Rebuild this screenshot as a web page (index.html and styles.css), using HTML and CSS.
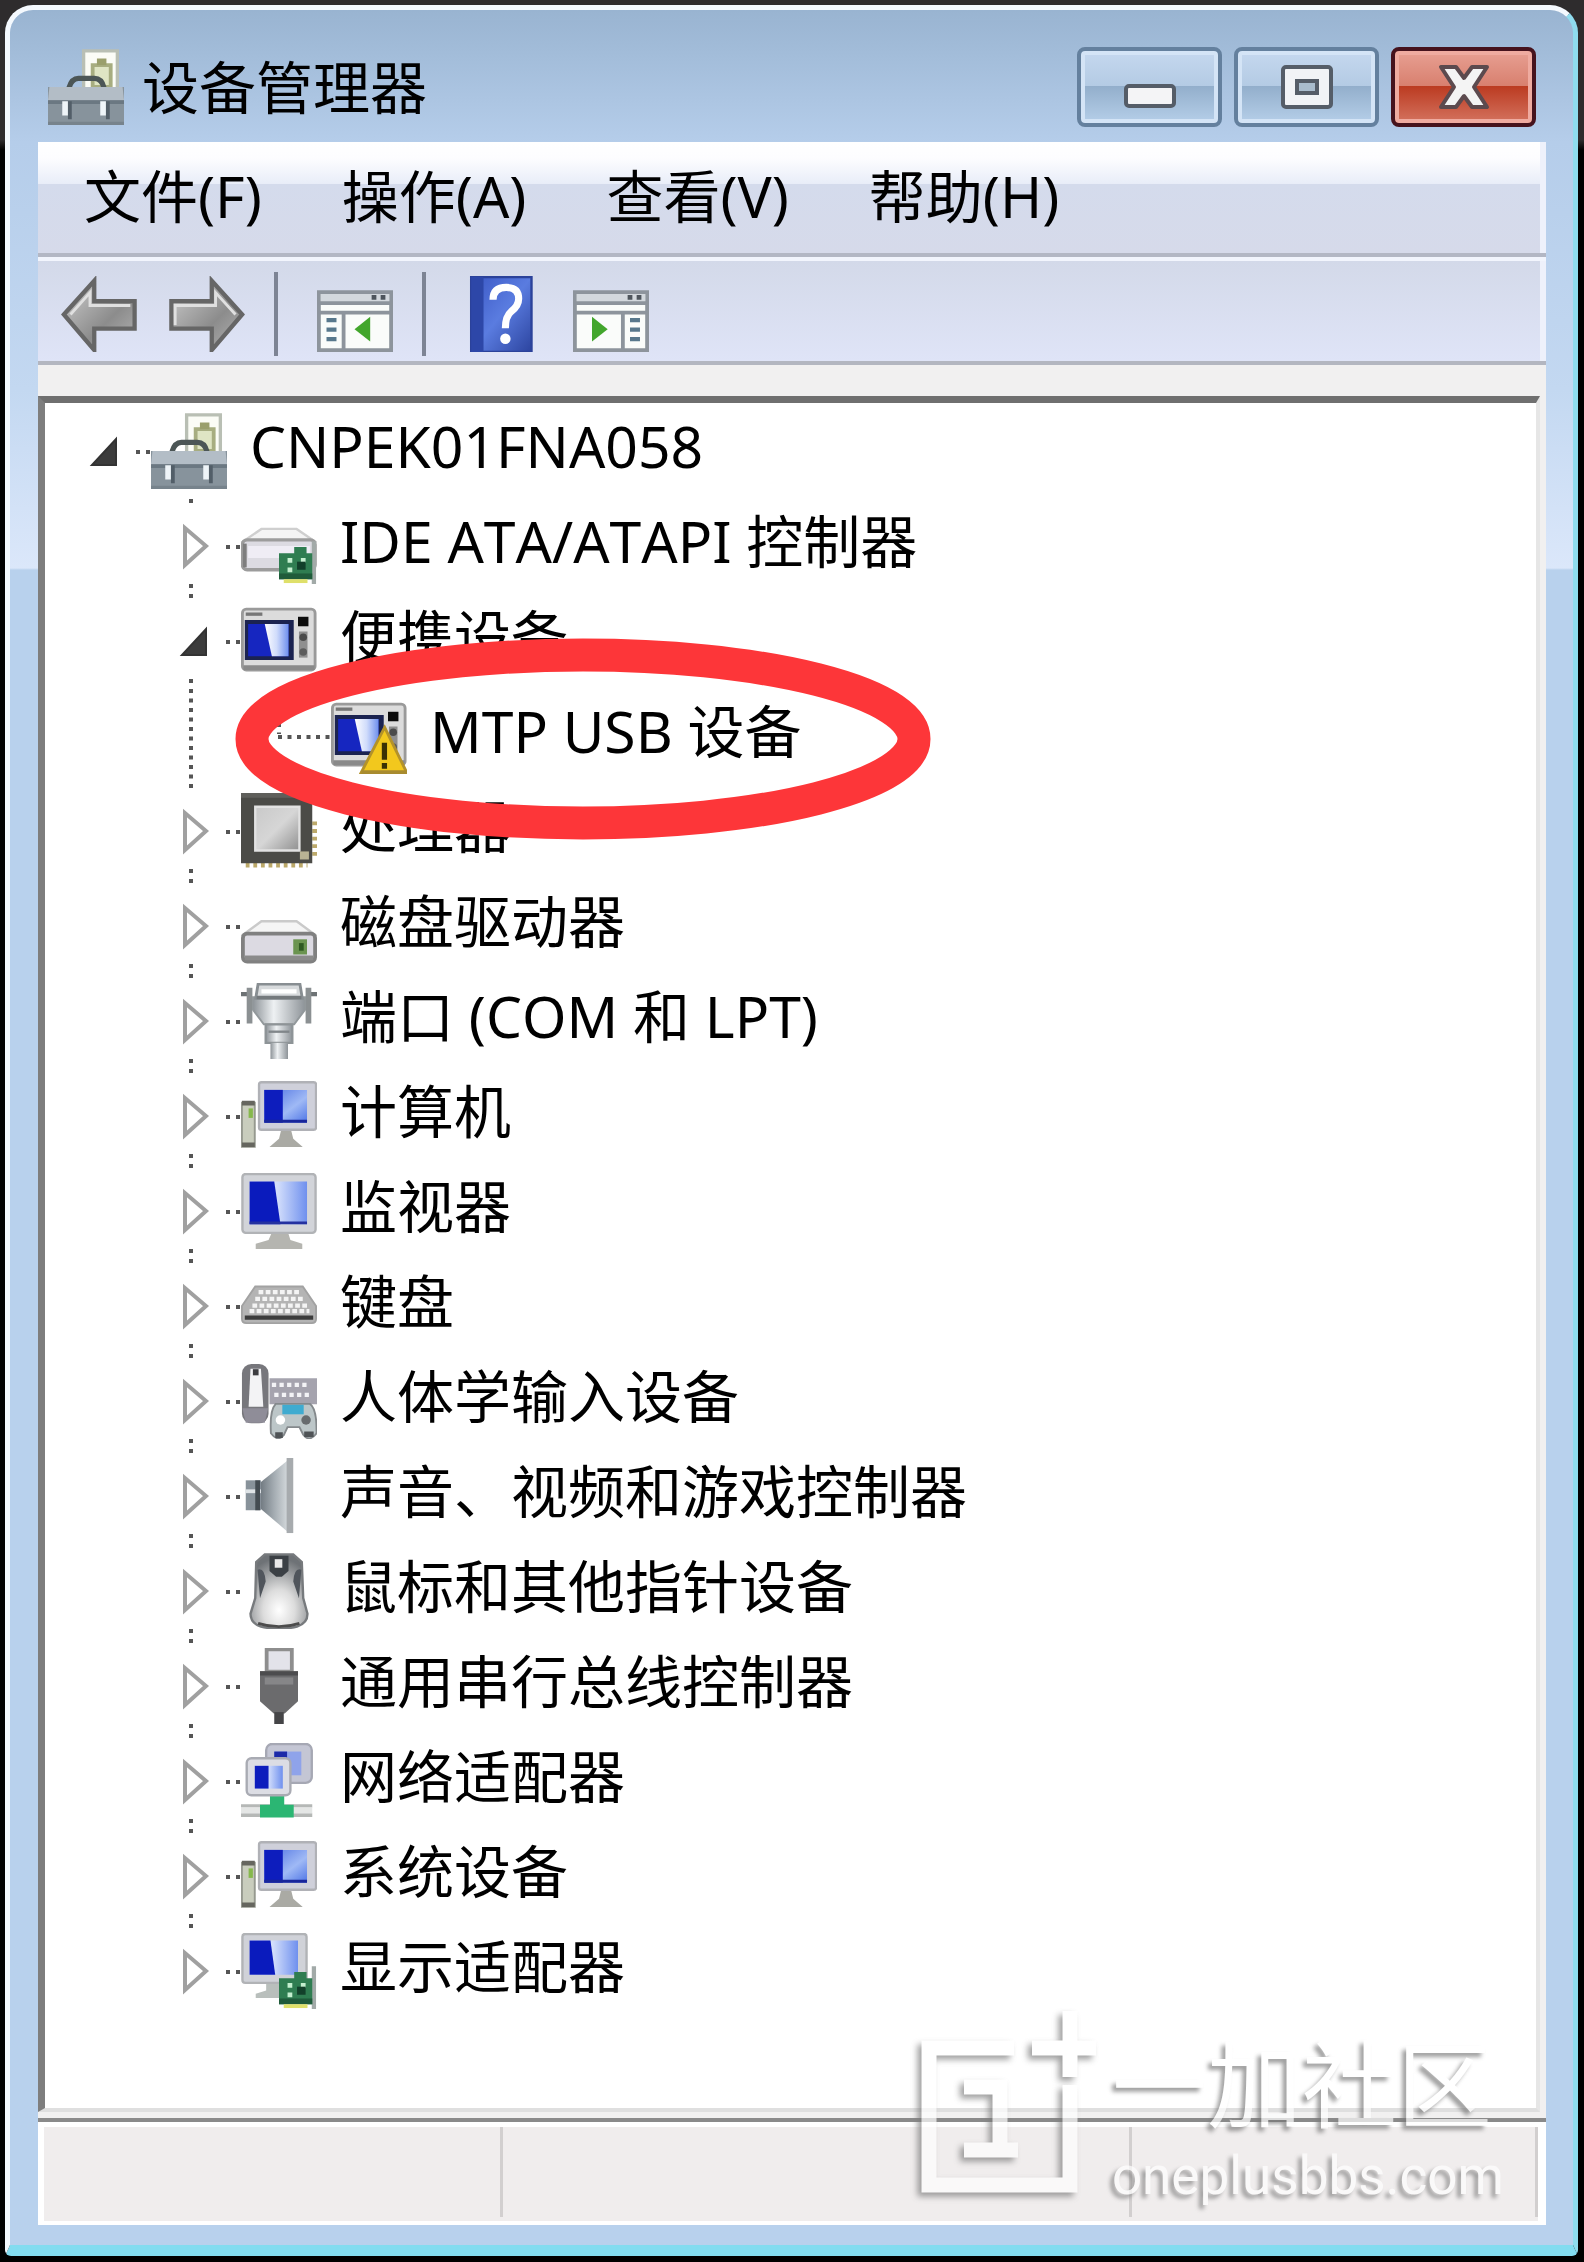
FILE: index.html
```html
<!DOCTYPE html>
<html lang="zh-CN">
<head>
  <meta charset="UTF-8">
  <meta name="viewport" content="width=device-width, initial-scale=1.0">
  <title>设备管理器</title>
  <link rel="stylesheet" href="styles.css">
</head>
<body>
  <!-- Icon symbols, 16x16 grid -->
  <svg class="sprite" width="0" height="0" aria-hidden="true">
    <defs>
      <linearGradient id="g-screen" x1="0" y1="0" x2="1" y2="1">
        <stop offset="0" stop-color="#4a6ee0"/><stop offset="0.6" stop-color="#9fb9f5"/><stop offset="1" stop-color="#4d74e6"/>
      </linearGradient>
      <linearGradient id="g-light" x1="0" y1="0" x2="1" y2="0">
        <stop offset="0" stop-color="#ffffff"/><stop offset="0.5" stop-color="#d0dcfb"/><stop offset="1" stop-color="#6f90ee"/>
      </linearGradient>
      <linearGradient id="g-side" x1="0" y1="0" x2="1" y2="0">
        <stop offset="0" stop-color="#8d9398"/><stop offset="0.4" stop-color="#eef1f3"/><stop offset="1" stop-color="#8d9398"/>
      </linearGradient>
      <linearGradient id="g-cone" x1="0" y1="0" x2="1" y2="0">
        <stop offset="0" stop-color="#6f787f"/><stop offset="0.5" stop-color="#a3abb1"/><stop offset="1" stop-color="#d3d8db"/>
      </linearGradient>
      <linearGradient id="g-arrow" x1="0" y1="0" x2="1" y2="1">
        <stop offset="0" stop-color="#d0d0d0"/><stop offset="0.6" stop-color="#8c8c8c"/><stop offset="1" stop-color="#b4b4b4"/>
      </linearGradient>
      <linearGradient id="g-chip" x1="0" y1="0" x2="1" y2="1">
        <stop offset="0" stop-color="#c9c9c9"/><stop offset="0.5" stop-color="#d6d6d6"/><stop offset="1" stop-color="#8f8f8f"/>
      </linearGradient>
      <linearGradient id="g-book" x1="0" y1="0" x2="1" y2="1">
        <stop offset="0" stop-color="#3a57c4"/><stop offset="0.5" stop-color="#5a7ce0"/><stop offset="1" stop-color="#2c449f"/>
      </linearGradient>
      <radialGradient id="g-mouse" cx="0.5" cy="0.75" r="0.7">
        <stop offset="0" stop-color="#ffffff"/><stop offset="0.4" stop-color="#dcdcdc"/><stop offset="1" stop-color="#6e7276"/>
      </radialGradient>
    </defs>

    <symbol id="i-toolbox" viewBox="0 0 16 16">
      <path d="M7.5.4h7.1v8H7.5z" fill="#fbfcf6" stroke="#b9bfb4" stroke-width=".7"/>
      <path d="M9.4 3.4h3.8V8H9.4z" fill="#dfe5c4" stroke="#a7ad80" stroke-width=".8"/>
      <path d="M10.3 2h2v1.4h-2z" fill="#9a9f6c"/>
      <path d="M4.4 8.2Q5 6.200 6.400 6.200h3.400q1.500 0 2 2" fill="none" stroke="#4c5656" stroke-width="1.100"/>
      <path d="M0 8h16v8H0z" fill="#87939c"/>
      <path d="M.3 8h15.400l.3 2.800H0z" fill="#b3bdc6"/>
      <path d="M0 10.800h16v.8H0z" fill="#6b7882"/>
      <path d="M0 15.300h16v.7H0z" fill="#77838c"/>
      <path d="M3 11h1.200v3H3zM11 11h1.200v3H11z" fill="#eef4f8"/>
      <path d="M4.200 11h.8v3.800h-.8zM12.200 11h.8v3.800h-.8z" fill="#525e68"/>
    </symbol>

    <symbol id="i-card" viewBox="0 0 16 16">
      <path d="M14.900 7h.9v9h-.9z" fill="#a2aaa8"/>
      <path d="M8 9.500h3.200V8.200h2.600v1.300H15V15H8z" fill="#2f7d51"/>
      <path d="M8 13.800h7V15H8z" fill="#1f5b3a"/>
      <path d="M9.800 10.500h1v1h-1zM12.600 10.500h1v1h-1zM9.800 12.500h1v1h-1z" fill="#c4efcf"/>
      <path d="M11.800 11.300h1.800v1.700h-1.800z" fill="#12402a"/>
      <path d="M9 15h5v.8H9z" fill="#dfe06a"/>
    </symbol>

    <symbol id="i-ide" viewBox="0 0 16 16">
      <path d="M4.300 4.400h7.400L15.500 7H.5z" fill="#f4f4f4" stroke="#cfcfcf" stroke-width=".5"/>
      <rect x=".3" y="6.700" width="15.300" height="6.300" rx="1" fill="#dcdbe2" stroke="#9c9c9c" stroke-width=".7"/>
      <path d="M1.500 8h13v2.500h-13z" fill="#efedf5"/>
      <path d="M.4 7.500h.8v5H.4z" fill="#7e7e7e"/>
      <use href="#i-card"/>
    </symbol>

    <symbol id="i-disk" viewBox="0 0 16 16">
      <path d="M4.300 7h7.400l3.800 2.800H.5z" fill="#f5f5f5" stroke="#cacaca" stroke-width=".5"/>
      <rect x=".4" y="9.600" width="15.200" height="5.900" rx=".9" fill="#dcdae2" stroke="#808080" stroke-width=".8"/>
      <path d="M.8 14.200h14.400v1H.8z" fill="#8b8b8b"/>
      <path d="M11 10.800h2.900v3.200H11z" fill="#6b9450"/>
      <path d="M12.200 11.600h1v1.600h-1z" fill="#2f5a21"/>
    </symbol>

    <symbol id="i-portable" viewBox="0 0 16 16">
      <rect x=".3" y="1.300" width="15.300" height="12.800" rx=".8" fill="#dcdcdc" stroke="#9a9a9a" stroke-width=".6"/>
      <path d="M.5 13.100h15v1H.5z" fill="#8a8a8a"/>
      <path d="M1 2h3.500v.7H1z" fill="#777"/>
      <path d="M.8 3.600h10.300V12H.8z" fill="#1b2350"/>
      <path d="M1.500 4.400h8.500v6.800H1.500z" fill="#1626c0"/>
      <path d="M5 4.400h5v6.800H6.500z" fill="url(#g-light)"/>
      <path d="M12 2.900h2.200v2H12z" fill="#0c0c0c"/>
      <path d="M12.200 6h1.800v5.500h-1.800z" fill="#8f8f8f"/>
      <circle cx="13.100" cy="7.200" r=".8" fill="#4b4b4b"/>
      <circle cx="13.100" cy="10.300" r=".8" fill="#5c5c5c"/>
    </symbol>

    <symbol id="i-warning" viewBox="0 0 16 16">
      <use href="#i-portable"/>
      <path d="M11.300 6.200 16 15.800H6.300z" fill="#f2c81d" stroke="#b3922a" stroke-width=".6"/>
      <path d="M6.400 15.200H16v.8H6.400z" fill="#a88b2f"/>
      <path d="M10.700 9.400h1.100v3.600h-1.100zM10.700 13.700h1.100v1.200h-1.100z" fill="#3a3104"/>
    </symbol>

    <symbol id="i-cpu" viewBox="0 0 16 16">
      <path d="M1 15.200h13M15.500 6v8" fill="none" stroke="#bca96a" stroke-width="1" stroke-dasharray=".8 .8"/>
      <path d="M0 0h15v14.800H0z" fill="#4b4b47"/>
      <path d="M0 0h15v1H0z" fill="#5f5f5b"/>
      <path d="M3 2.900h9.300v9.200H3z" fill="url(#g-chip)" stroke="#e2e2e2" stroke-width=".5"/>
      <path d="M12.400 12.300h1.900v1.700h-1.900z" fill="#b9b394"/>
    </symbol>

    <symbol id="i-port" viewBox="0 0 16 16">
      <path d="M0 1.900h2.300v.9H0zM13.700 1.900H16v.9h-2.300z" fill="#6d7274"/>
      <path d="M1.200 1h1.200v7.500H1.200zM13.600 1h1.200v7.500h-1.200z" fill="#8b9092"/>
      <path d="M2.500 3h11v2.600l-2.300 3.100H4.800L2.500 5.600z" fill="url(#g-side)" stroke="#92989b" stroke-width=".4"/>
      <path d="M3.600.2h8.800l.5 3H3.100z" fill="#d7dadc" stroke="#888e92" stroke-width=".6"/>
      <path d="M4.300 1.300h7.400v.9H4.300z" fill="#fff"/>
      <path d="M3.300 2.700h9.400v.7H3.300z" fill="#74797c"/>
      <path d="M5.200 8.700h5.600v3.900H5.200z" fill="url(#g-side)" stroke="#8e9497" stroke-width=".5"/>
      <path d="M5.800 10h4.400v.5H5.800z" fill="#80868a"/>
      <path d="M6.200 12.600h3.700V16H6.200z" fill="url(#g-side)"/>
    </symbol>

    <symbol id="i-computer" viewBox="0 0 16 16">
      <path d="M.2 5.200h2.700v9.300H.2z" fill="#c9cdbd" stroke="#96998f" stroke-width=".4"/>
      <path d="M.2 4.800h2.700v1H.2zM.2 13.600h2.700v.9H.2z" fill="#66665f"/>
      <path d="M1.600 6.400h.9v2h-.9z" fill="#86b84c"/>
      <path d="M8.500 10.800h2l.5 2 2 1.700H6l2-1.700z" fill="#aaaaa4"/>
      <rect x="3.800" y=".9" width="12" height="10" rx=".5" fill="#cfd0da" stroke="#b0b1b6" stroke-width=".5"/>
      <path d="M4.900 2.500h9v6.900h-9z" fill="url(#g-screen)"/>
      <path d="M4.900 2.500h3.900v6.900H4.900z" fill="#0d1dbd"/>
      <path d="M4.900 8.800h9v.6h-9z" fill="#18259a"/>
    </symbol>

    <symbol id="i-monitor" viewBox="0 0 16 16">
      <path d="M6.500 12.500h3.400l.5 1.600 2.500.8V16H3.100v-1.100l2.700-.8z" fill="#b5b5b0"/>
      <rect x=".3" y=".2" width="15.400" height="12.400" rx=".7" fill="#d2d4d9" stroke="#b1b3b6" stroke-width=".5"/>
      <path d="M1.800 1.800h12.100v9H1.800z" fill="url(#g-light)"/>
      <path d="M1.800 1.800H7l1.300 9H1.800z" fill="#0a1bbd"/>
      <path d="M1.800 10.200h12.100v.6H1.800z" fill="#2431a0"/>
    </symbol>

    <symbol id="i-keyboard" viewBox="0 0 16 16">
      <path d="M3 3.900h10L15.800 8v2.700q0 .9-.9.900H1.100q-.9 0-.9-.9V8z" fill="#b4b4b4" stroke="#a2a2a2" stroke-width=".4"/>
      <path d="M3.700 5.100h8.900M3 6.500h10.300M2.400 7.900h11.600M1.800 9.100h12.600" stroke="#f4f4f4" stroke-width=".9" stroke-dasharray="1 .5"/>
      <path d="M.8 10h14.400v.9H.8z" fill="#3c3c3c"/>
    </symbol>

    <symbol id="i-hid" viewBox="0 0 16 16">
      <path d="M6 3.200h10v5.500H6z" fill="#a5a3ae"/>
      <path d="M6.500 4.600h8M7 6.700h8" stroke="#f3f3f6" stroke-width=".9" stroke-dasharray=".9 .7"/>
      <rect x=".2" y=".2" width="5.600" height="12.500" rx="2" fill="#77777c"/>
      <path d="M2 1.200h2.200l.5 8H1.600z" fill="#f3f3f5"/>
      <path d="M2.500 1.300h1.200v1.300H2.500z" fill="#3c3c40"/>
      <path d="M.3 9.500h5.400L5 12.600H1z" fill="#8f8d98"/>
      <path d="M7.300 8.600h7.200q1.500 1 1.400 6.200-1.500 2-2.800.3l-.8-1.600H9.800L9 15.200q-1.300 1.500-2.700-.4Q6 10 7.300 8.600z" fill="#bcc6c8" stroke="#84898c" stroke-width=".4"/>
      <path d="M8.700 8.800h4.500v2H8.700z" fill="#3fabd0"/>
      <circle cx="8.300" cy="12" r="1" fill="#fff"/>
      <circle cx="13.700" cy="12" r="1" fill="#676b6e"/>
      <path d="M7.200 14.600h1.600v1.200H7.200zM13.300 14.400h2v1.200h-2z" fill="#4f5356"/>
    </symbol>

    <symbol id="i-speaker" viewBox="0 0 16 16">
      <path d="M4 5.200 9.800.5v15L4 10.600z" fill="url(#g-cone)"/>
      <path d="M1 4.700h3.200v6.300H1z" fill="#88929a"/>
      <path d="M1 6.600h3.200v.8H1z" fill="#dfe4e7"/>
      <path d="M3 4.700h1v6.300H3z" fill="#444c52"/>
      <path d="M9.600 0h1.400v15.800H9.600z" fill="#a7abae"/>
    </symbol>

    <symbol id="i-mouse" viewBox="0 0 16 16">
      <path d="M5 .3h6l1.800 1.600.3 7.600.9 3.300q0 2-2.200 2.700-3.800.9-7.600 0Q2 14.800 2 12.800l1-3.300.2-7.600z" fill="url(#g-mouse)" stroke="#777a7d" stroke-width=".5"/>
      <path d="M3.500 3.500Q5 3 5.200 6L4 9.500zM12.700 3.500Q11.200 3 11 6l1.200 3.500z" fill="#50555c"/>
      <path d="M6 .6h4v3.200L8.600 5H7.400L6 3.800z" fill="#3b4045"/>
      <path d="M7.100 1.300h1.600v1.800H7.100z" fill="#e9e9e9"/>
      <path d="M3.600 14.800q4.400 1.400 8.700 0" fill="none" stroke="#4c4c4c" stroke-width=".6"/>
    </symbol>

    <symbol id="i-usb" viewBox="0 0 16 16">
      <path d="M5.400.3h5.300V5H5.400z" fill="#e3e3ea" stroke="#8e8e8e" stroke-width=".8"/>
      <path d="M4 4.900h8v6.300l-2.800 2.600H6.900L4 11.200z" fill="#6b6b6d"/>
      <path d="M4 4.900h8v.9H4z" fill="#4c4c4e"/>
      <path d="M5 6.200h6v1.500H5z" fill="#868688"/>
      <path d="M7 13.500h2V16H7z" fill="#454547"/>
    </symbol>

    <symbol id="i-network" viewBox="0 0 16 16">
      <path d="M0 12.900h15v.7H0zM0 14.800h15v.8H0z" fill="#b5b8b6"/>
      <path d="M0 13.600h15v1.200H0z" fill="#e4e6e5"/>
      <path d="M6.100 10.800h3v2.200h2v2.700H4V13h2.100z" fill="#2bb673"/>
      <rect x="5.300" y=".2" width="9.600" height="8.200" rx="1.300" fill="#c4c6d4" stroke="#a6a8b4" stroke-width=".5"/>
      <path d="M7 1.800h5.700v5H7z" fill="#8fa3ea"/>
      <path d="M7 1.800h2.700v2.200H7z" fill="#1c2aa8"/>
      <rect x="1.200" y="3.200" width="9.200" height="7.800" rx="1" fill="#dcdde4" stroke="#a9abb3" stroke-width=".5"/>
      <path d="M2.900 4.800h5.900v4.800H2.900z" fill="url(#g-light)"/>
      <path d="M2.900 4.800h2.900v4.800H2.900z" fill="#0d1dbd"/>
    </symbol>

    <symbol id="i-display" viewBox="0 0 16 16">
      <path d="M5.300 10.500h3v2h.8v1.200h-6v-.9l2.200-.7z" fill="#b9bfbc"/>
      <rect x=".3" y=".2" width="13.500" height="10.300" rx=".6" fill="#d0d2d8" stroke="#b1b3b6" stroke-width=".5"/>
      <path d="M1.800 1.600h10.200v7.200H1.800z" fill="url(#g-light)"/>
      <path d="M1.800 1.600h4.400l1 7.200H1.800z" fill="#0a1bbd"/>
      <use href="#i-card"/>
    </symbol>

    <symbol id="i-back" viewBox="0 0 16 16">
      <path d="M.6 8.100 7 1v4.300h8.500v5.800H7v4.500z" fill="url(#g-arrow)" stroke="#666" stroke-width=".9"/>
      <path d="M2 8.100 6.100 3.500v2.700h8.500" fill="none" stroke="#e0e0e0" stroke-width=".6"/>
    </symbol>
    <symbol id="i-forward" viewBox="0 0 16 16">
      <path d="M15.400 8.100 9 1v4.300H.5v5.800H9v4.500z" fill="url(#g-arrow)" stroke="#666" stroke-width=".9"/>
      <path d="M1.300 10.300V6.200h8.500V3.500L14 8.100" fill="none" stroke="#e0e0e0" stroke-width=".6"/>
    </symbol>
    <symbol id="i-panel-left" viewBox="0 0 16 16">
      <path d="M.4 3.400h15.200v12.200H.4z" fill="#fafcfa" stroke="#8d949c" stroke-width=".8"/>
      <path d="M.8 3.800h14.400v1.800H.8z" fill="#d3d8dd"/>
      <path d="M.4 5.700h15.200M.4 7.700h15.200M5.600 7.700v8" stroke="#8d949c" stroke-width=".8"/>
      <path d="M11.500 4h1v1h-1zM13.400 4h1v1h-1z" fill="#4e555c"/>
      <path d="M2 9.300h2.100M2 11.300h2.100M2 13.300h2.100" stroke="#58788c" stroke-width=".9"/>
      <path d="M11.200 8.600v5.200L7.900 11.200z" fill="#42a62c"/>
    </symbol>
    <symbol id="i-panel-right" viewBox="0 0 16 16">
      <path d="M.4 3.400h15.200v12.200H.4z" fill="#fafcfa" stroke="#8d949c" stroke-width=".8"/>
      <path d="M.8 3.800h14.400v1.800H.8z" fill="#d3d8dd"/>
      <path d="M.4 5.700h15.200M.4 7.700h15.200M10.500 7.700v8" stroke="#8d949c" stroke-width=".8"/>
      <path d="M11.500 4h1v1h-1zM13.400 4h1v1h-1z" fill="#4e555c"/>
      <path d="M12 9.300h2.100M12 11.300h2.100M12 13.300h2.100" stroke="#58788c" stroke-width=".9"/>
      <path d="M4 8.600v5.200l3.300-2.600z" fill="#42a62c"/>
    </symbol>
    <symbol id="i-help" viewBox="0 0 16 16">
      <path d="M1.300.2h12.700V16H1.300z" fill="url(#g-book)" stroke="#2b429a" stroke-width=".5"/>
      <path d="M1.300.2h2.600V16H1.300z" fill="#2d47a8"/>
      <path d="M5.900 5q0-2.600 2.800-2.600 2.600 0 2.600 2.400 0 1.500-1.600 2.700Q8.500 8.500 8.500 11" fill="none" stroke="#fff" stroke-width="1.500"/>
      <circle cx="8.500" cy="13.200" r="1.100" fill="#fff"/>
    </symbol>

    <!-- Tree branch cells: toggle arrow with dotted connectors -->
    <symbol id="b-root" viewBox="0 0 90 95">
      <path d="M55 36v26H31z" fill="#3c3c3c" stroke="#333" stroke-width="2"/>
      <path d="M75 47h4v4h-4zM85 47h4v4h-4z" fill="#555"/>
    </symbol>
    <symbol id="b-closed" viewBox="0 0 90 95">
      <path d="M34 30v37l21-19z" fill="#fff" stroke="#a0a0a0" stroke-width="4"/>
      <path d="M75 47h4v4h-4zM85 47h4v4h-4zM38 1h4v4h-4zM38 86h4v4h-4z" fill="#555"/>
    </symbol>
    <symbol id="b-last" viewBox="0 0 90 95">
      <path d="M34 30v37l21-19z" fill="#fff" stroke="#a0a0a0" stroke-width="4"/>
      <path d="M75 47h4v4h-4zM85 47h4v4h-4zM38 1h4v4h-4z" fill="#555"/>
    </symbol>
    <symbol id="b-open" viewBox="0 0 90 95">
      <path d="M55 36v26H31z" fill="#3c3c3c" stroke="#333" stroke-width="2"/>
      <path d="M75 47h4v4h-4zM85 47h4v4h-4zM38 1h4v4h-4zM38 86h4v4h-4z" fill="#555"/>
    </symbol>
    <symbol id="b-line" viewBox="0 0 90 95">
      <path d="M40 1v94" stroke="#555" stroke-width="4" stroke-dasharray="4 5.500"/>
    </symbol>
    <symbol id="b-elbow" viewBox="0 0 90 95">
      <path d="M38 16v30M37 49h53" stroke="#555" stroke-width="4" stroke-dasharray="4 5.500"/>
    </symbol>
  </svg>

  <main class="window">
    <header class="titlebar">
      <svg class="icon"><use href="#i-toolbox"/></svg>
      <h1 class="title">设备管理器</h1>
      <div class="controls">
        <button type="button" class="control" aria-label="最小化">
          <svg viewBox="0 0 56 46"><rect x="4" y="22" width="48" height="20" rx="3" fill="#f4f4f6" stroke="#555d68" stroke-width="4"/></svg>
        </button>
        <button type="button" class="control" aria-label="最大化">
          <svg viewBox="0 0 56 46"><rect x="4" y="3" width="48" height="40" rx="3" fill="#f1f3f6" stroke="#555d68" stroke-width="4"/><rect x="18" y="17" width="20" height="12" fill="#a9bccd" stroke="#555d68" stroke-width="4"/></svg>
        </button>
        <button type="button" class="control close" aria-label="关闭">
          <svg viewBox="0 0 56 46"><path d="M5 3h15l8 11 8-11h15L38 23l13 20H36l-8-11-8 11H5l13-20z" fill="#f4f4f4" stroke="#5c4a4e" stroke-width="4" stroke-linejoin="round"/></svg>
        </button>
      </div>
    </header>

    <div class="client">
      <nav class="menubar">
        <button type="button">文件(F)</button>
        <button type="button">操作(A)</button>
        <button type="button">查看(V)</button>
        <button type="button">帮助(H)</button>
      </nav>

      <div class="toolbar">
        <div class="tool-group">
          <button type="button" aria-label="后退"><svg class="icon"><use href="#i-back"/></svg></button>
          <button type="button" aria-label="前进"><svg class="icon"><use href="#i-forward"/></svg></button>
        </div>
        <div class="tool-group">
          <button type="button" aria-label="显示/隐藏控制台树"><svg class="icon"><use href="#i-panel-left"/></svg></button>
        </div>
        <div class="tool-group">
          <button type="button" aria-label="帮助"><svg class="icon"><use href="#i-help"/></svg></button>
          <button type="button" aria-label="显示/隐藏操作窗格"><svg class="icon"><use href="#i-panel-right"/></svg></button>
        </div>
      </div>

      <ul class="tree">
        <li class="node"><button type="button" class="toggle" aria-label="折叠"><svg class="branch"><use href="#b-root"/></svg></button><svg class="icon"><use href="#i-toolbox"/></svg><span>CNPEK01FNA058</span></li>
        <li class="node child"><button type="button" class="toggle" aria-label="展开"><svg class="branch"><use href="#b-closed"/></svg></button><svg class="icon"><use href="#i-ide"/></svg><span>IDE ATA/ATAPI 控制器</span></li>
        <li class="node child"><button type="button" class="toggle" aria-label="折叠"><svg class="branch"><use href="#b-open"/></svg></button><svg class="icon"><use href="#i-portable"/></svg><span>便携设备</span></li>
        <li class="node child marked"><svg class="branch"><use href="#b-line"/></svg><svg class="branch"><use href="#b-elbow"/></svg><svg class="icon"><use href="#i-warning"/></svg><span>MTP USB 设备</span>
          <svg class="mark" viewBox="0 0 696 202"><ellipse cx="348" cy="101" rx="331" ry="84" fill="none" stroke="#fd3639" stroke-width="33"/></svg>
        </li>
        <li class="node child"><button type="button" class="toggle" aria-label="展开"><svg class="branch"><use href="#b-closed"/></svg></button><svg class="icon"><use href="#i-cpu"/></svg><span>处理器</span></li>
        <li class="node child"><button type="button" class="toggle" aria-label="展开"><svg class="branch"><use href="#b-closed"/></svg></button><svg class="icon"><use href="#i-disk"/></svg><span>磁盘驱动器</span></li>
        <li class="node child"><button type="button" class="toggle" aria-label="展开"><svg class="branch"><use href="#b-closed"/></svg></button><svg class="icon"><use href="#i-port"/></svg><span>端口 (COM 和 LPT)</span></li>
        <li class="node child"><button type="button" class="toggle" aria-label="展开"><svg class="branch"><use href="#b-closed"/></svg></button><svg class="icon"><use href="#i-computer"/></svg><span>计算机</span></li>
        <li class="node child"><button type="button" class="toggle" aria-label="展开"><svg class="branch"><use href="#b-closed"/></svg></button><svg class="icon"><use href="#i-monitor"/></svg><span>监视器</span></li>
        <li class="node child"><button type="button" class="toggle" aria-label="展开"><svg class="branch"><use href="#b-closed"/></svg></button><svg class="icon"><use href="#i-keyboard"/></svg><span>键盘</span></li>
        <li class="node child"><button type="button" class="toggle" aria-label="展开"><svg class="branch"><use href="#b-closed"/></svg></button><svg class="icon"><use href="#i-hid"/></svg><span>人体学输入设备</span></li>
        <li class="node child"><button type="button" class="toggle" aria-label="展开"><svg class="branch"><use href="#b-closed"/></svg></button><svg class="icon"><use href="#i-speaker"/></svg><span>声音、视频和游戏控制器</span></li>
        <li class="node child"><button type="button" class="toggle" aria-label="展开"><svg class="branch"><use href="#b-closed"/></svg></button><svg class="icon"><use href="#i-mouse"/></svg><span>鼠标和其他指针设备</span></li>
        <li class="node child"><button type="button" class="toggle" aria-label="展开"><svg class="branch"><use href="#b-closed"/></svg></button><svg class="icon"><use href="#i-usb"/></svg><span>通用串行总线控制器</span></li>
        <li class="node child"><button type="button" class="toggle" aria-label="展开"><svg class="branch"><use href="#b-closed"/></svg></button><svg class="icon"><use href="#i-network"/></svg><span>网络适配器</span></li>
        <li class="node child"><button type="button" class="toggle" aria-label="展开"><svg class="branch"><use href="#b-closed"/></svg></button><svg class="icon"><use href="#i-computer"/></svg><span>系统设备</span></li>
        <li class="node child"><button type="button" class="toggle" aria-label="展开"><svg class="branch"><use href="#b-last"/></svg></button><svg class="icon"><use href="#i-display"/></svg><span>显示适配器</span></li>
      </ul>

      <footer class="statusbar">
        <div></div>
        <div></div>
        <div></div>
      </footer>

      <!-- Watermark -->
      <div class="watermark">
        <svg class="watermark-logo" viewBox="0 0 184 190">
          <path d="M102 37H17v137h141V74M120 37h65M158 0v66M52 76h36v64M52 139h54" fill="none" stroke="#fff" stroke-width="15"/>
        </svg>
        <div class="watermark-text">
          <p class="watermark-name">一加社区</p>
          <p class="watermark-site">oneplusbbs.com</p>
        </div>
      </div>
    </div>
  </main>
</body>
</html>
```
FILE: styles.css
```css
* {
  margin: 0;
  padding: 0;
  box-sizing: border-box;
}

body {
  min-height: 100vh;
  display: flex;
  padding: 5px 6px 6px 5px;
  background: linear-gradient(#2e2c2d 0, #2e2c2d 140px, #000 150px);
  font-family: "Noto Sans", "Noto Sans CJK SC", sans-serif;
  font-size: 57px;
  font-kerning: none;
  line-height: 76px;
  color: #000;
}

button {
  border: none;
  background: none;
  font: inherit;
  font-kerning: none;
  color: inherit;
}

svg {
  display: block;
  flex: none;
}

.sprite {
  position: absolute;
}

.icon {
  width: 76px;
  height: 76px;
}

/* Window frame */
.window {
  flex: 1;
  display: flex;
  flex-direction: column;
  padding: 0 27px 20px 28px;
  border: 5px solid #f4f9fe;
  border-right-color: #8fdcee;
  border-bottom: 11px solid #82dcf0;
  border-radius: 28px 28px 6px 6px;
  background: linear-gradient(#99b4d1 0, #b5cdea 132px, #c3d8f1 380px, #dbe7fa 558px, #b8d1ed 560px);
}

.titlebar {
  height: 132px;
  display: flex;
  align-items: center;
  gap: 18px;
  padding: 22px 10px 0 10px;
}

.title {
  flex: 1;
  font-size: 57px;
  font-weight: normal;
}

.controls {
  display: flex;
  gap: 12px;
}

.control {
  width: 145px;
  height: 80px;
  display: flex;
  align-items: center;
  justify-content: center;
  border: 4px solid #64809e;
  border-radius: 8px;
  box-shadow: inset 0 0 0 4px #d4e4f6;
  background: linear-gradient(#c5d8ef 0, #b4cbe4 48%, #92aecb 48%, #b6cfe9 100%);
}

.control svg {
  width: 56px;
  height: 46px;
}

.control.close {
  border-color: #46131d;
  box-shadow: inset 0 0 0 4px #efaba0;
  background: linear-gradient(#e8a093 0, #d8806f 48%, #bb3a20 48%, #d4735f 100%);
}

/* Client area */
.client {
  position: relative;
  flex: 1;
  display: flex;
  flex-direction: column;
  background: #f1f0f0;
}

.menubar {
  height: 115px;
  display: flex;
  align-items: center;
  gap: 80px;
  padding: 0 46px 4px;
  border-bottom: 4px solid #b3b7c4;
  box-shadow: inset -6px 0 #eef1fb;
  background: linear-gradient(#fff 0, #fdfdff 16px, #e8edf8 42px, #d4dbec 42px, #d6daea 100%);
}

.toolbar {
  height: 108px;
  display: flex;
  align-items: center;
  padding: 6px 0 0 23px;
  border-top: 4px solid #f2f5fd;
  border-bottom: 4px solid #b3b6c0;
  box-shadow: inset -6px 0 #eef1fb;
  background: linear-gradient(#d3d9e9, #dfe4f7);
}

.tool-group {
  display: flex;
  align-items: center;
  gap: 32px;
  height: 84px;
  padding-right: 29px;
}

.tool-group + .tool-group {
  padding-left: 39px;
  border-left: 4px solid #7d8494;
}

/* Device tree */
.tree {
  flex: 1;
  margin: 31px 6px 6px 0;
  padding-left: 16px;
  list-style: none;
  border: 7px solid #6f6f6f;
  border-left-color: #7e7e7e;
  border-right: 4px solid #e6e6e6;
  border-bottom: 4px solid #dfdfdf;
  background: #fff;
}

.node {
  display: flex;
  align-items: center;
  height: 95px;
  white-space: nowrap;
}

.node span {
  padding: 0 0 9px 23px;
}

.child {
  padding-left: 90px;
}

.branch {
  width: 90px;
  height: 95px;
}

.marked {
  position: relative;
}

.mark {
  position: absolute;
  z-index: 1;
  top: -50px;
  left: 174px;
  width: 696px;
  height: 202px;
}

/* Status bar */
.statusbar {
  height: 107px;
  display: grid;
  grid-template-columns: 460fr 630fr 406fr;
  padding: 0 8px 4px 5px;
  border-top: 4px solid #8a8a8a;
  border-bottom: 4px solid #fff;
  background: #f0eded;
  box-shadow: inset 0 5px #fff, inset 6px 0 #fff, inset -8px 0 #fff;
}

.statusbar div {
  margin-top: 5px;
  border-right: 3px solid #d2cfcf;
}

/* Watermark */
.watermark {
  position: absolute;
  right: 42px;
  bottom: 16px;
  display: flex;
  align-items: flex-end;
  gap: 16px;
  color: #fff;
  opacity: 0.7;
}

.watermark-logo {
  width: 184px;
  height: 206px;
  filter: drop-shadow(-4px 4px 3px #777);
}

.watermark-text {
  text-shadow: -4px 4px 4px #777;
}

.watermark-name {
  font-family: "Liberation Sans", "Noto Sans CJK SC", sans-serif;
  font-size: 95px;
  line-height: 110px;
}

.watermark-site {
  font-family: Roboto, sans-serif;
  font-size: 53px;
  line-height: 66px;
}
```
